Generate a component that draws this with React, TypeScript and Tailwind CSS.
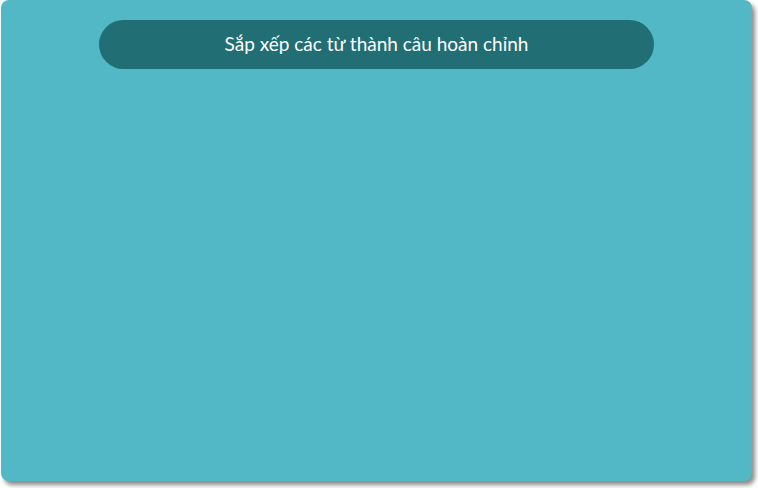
export default function App() {
  return (
    <div className="h-[488px] w-[758px] bg-white pl-px">
      <div className="flex h-[481px] w-[751px] flex-col items-center rounded-lg bg-[#53b8c5] pt-5 shadow-[3px_4px_4px_rgba(0,0,0,0.45)]">
        <div
          className="flex h-[49px] w-[555px] items-center justify-center rounded-full bg-[#216e75] text-[19px] text-white"
          style={{ fontFamily: "Lato, 'Open Sans', sans-serif" }}
        >
          Sắp xếp các từ thành câu hoàn chỉnh
        </div>
      </div>
    </div>
  );
}
